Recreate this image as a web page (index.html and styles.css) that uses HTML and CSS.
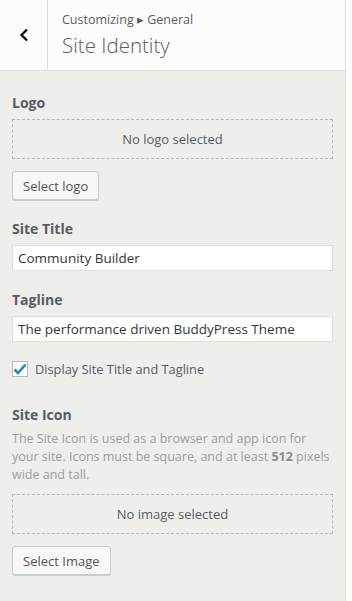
FILE: index.html
```html
<!DOCTYPE html>
<html lang="en">
<head>
  <meta charset="UTF-8" />
  <title>Customizing - Site Identity</title>
  <link rel="stylesheet" href="styles.css">
</head>
<body>
  <div class="panel">
    <header class="panel-header">
      <button class="back-button" aria-label="Back">
        <svg width="10" height="14" viewBox="0 0 10 14">
          <path d="M8 1.5 L2.5 7 L8 12.5" fill="none" stroke="#111" stroke-width="2.4" />
        </svg>
      </button>
      <div class="panel-title">
        <span class="crumb">Customizing &#9656; General</span>
        <h1>Site Identity</h1>
      </div>
    </header>

    <section class="controls">
      <div class="control">
        <h2>Logo</h2>
        <div class="placeholder">No logo selected</div>
        <button class="btn">Select logo</button>
      </div>

      <div class="control">
        <h2>Site Title</h2>
        <input class="text-input" type="text" value="Community Builder">
      </div>

      <div class="control">
        <h2>Tagline</h2>
        <input class="text-input" type="text" value="The performance driven BuddyPress Theme">
      </div>

      <label class="checkbox-row">
        <span class="checkbox">
          <svg width="14" height="12" viewBox="0 0 14 12">
            <path d="M1.5 6.5 L5 10 L12.5 1.5" fill="none" stroke="#1e8cbe" stroke-width="2.6" />
          </svg>
        </span>
        Display Site Title and Tagline
      </label>

      <div class="control">
        <h2>Site Icon</h2>
        <p class="description">The Site Icon is used as a browser and app icon for your site. Icons must be square, and at least <strong>512</strong> pixels wide and tall.</p>
        <div class="placeholder">No image selected</div>
        <button class="btn">Select Image</button>
      </div>
    </section>
  </div>
</body>
</html>
```

FILE: styles.css
```css
body {
  margin: 0;
  background: #fff;
  font-family: 'Open Sans', 'Noto Sans', sans-serif;
  color: #555d66;
}

.panel {
  width: 345px;
  min-height: 601px;
  background: #eeeeeb;
  border-right: 1px solid #dddddd;
}

.panel-header {
  display: flex;
  height: 70px;
  background: #fcfcfc;
  border-bottom: 1px solid #dddddd;
}

.back-button {
  width: 48px;
  padding: 0 0 0 1px;
  border: 0;
  border-right: 1px solid #dddddd;
  background: transparent;
  display: flex;
  align-items: center;
  justify-content: center;
}

.panel-title {
  padding: 11px 14px 10px;
  display: flex;
  flex-direction: column;
}

.crumb {
  font-size: 12.5px;
  line-height: 18px;
  color: #555d66;
}

.panel-title h1 {
  margin: 3px 0 0;
  font-size: 20.5px;
  font-weight: 300;
  line-height: 26px;
  color: #555d66;
}

.controls {
  padding: 22px 12px 20px;
}

.control {
  margin-bottom: 19px;
}

.control h2 {
  margin: 0 0 6px;
  font-size: 14px;
  line-height: 20px;
  font-weight: 700;
  color: #555d66;
}

.placeholder {
  height: 38px;
  border: 1px dashed #b4b9be;
  display: flex;
  align-items: center;
  justify-content: center;
  font-size: 13px;
  color: #555d66;
}

.btn {
  margin-top: 12px;
  height: 29px;
  padding: 0 10px;
  font-family: inherit;
  font-size: 13px;
  color: #555;
  background: #f7f7f5;
  border: 1px solid #cccccc;
  border-radius: 3px;
  box-shadow: 0 1px 0 #cccccc;
}

.text-input {
  box-sizing: border-box;
  width: 100%;
  height: 26px;
  margin: 0;
  padding: 0 5px;
  font-family: inherit;
  font-size: 13.5px;
  color: #32373c;
  background: #fff;
  border: 1px solid #dddddd;
}

.checkbox-row {
  display: flex;
  align-items: center;
  gap: 7px;
  font-size: 12.8px;
  line-height: 16px;
  color: #555d66;
  margin: 19px 0 28px;
}

.checkbox {
  box-sizing: border-box;
  width: 16px;
  height: 16px;
  background: #fff;
  border: 1px solid #b4b9be;
  display: flex;
  align-items: center;
  justify-content: center;
}

.description {
  margin: -1px 0 10px;
  font-size: 12.5px;
  line-height: 18px;
  color: #9a9ea3;
}

.description strong {
  color: #888c91;
}
```
